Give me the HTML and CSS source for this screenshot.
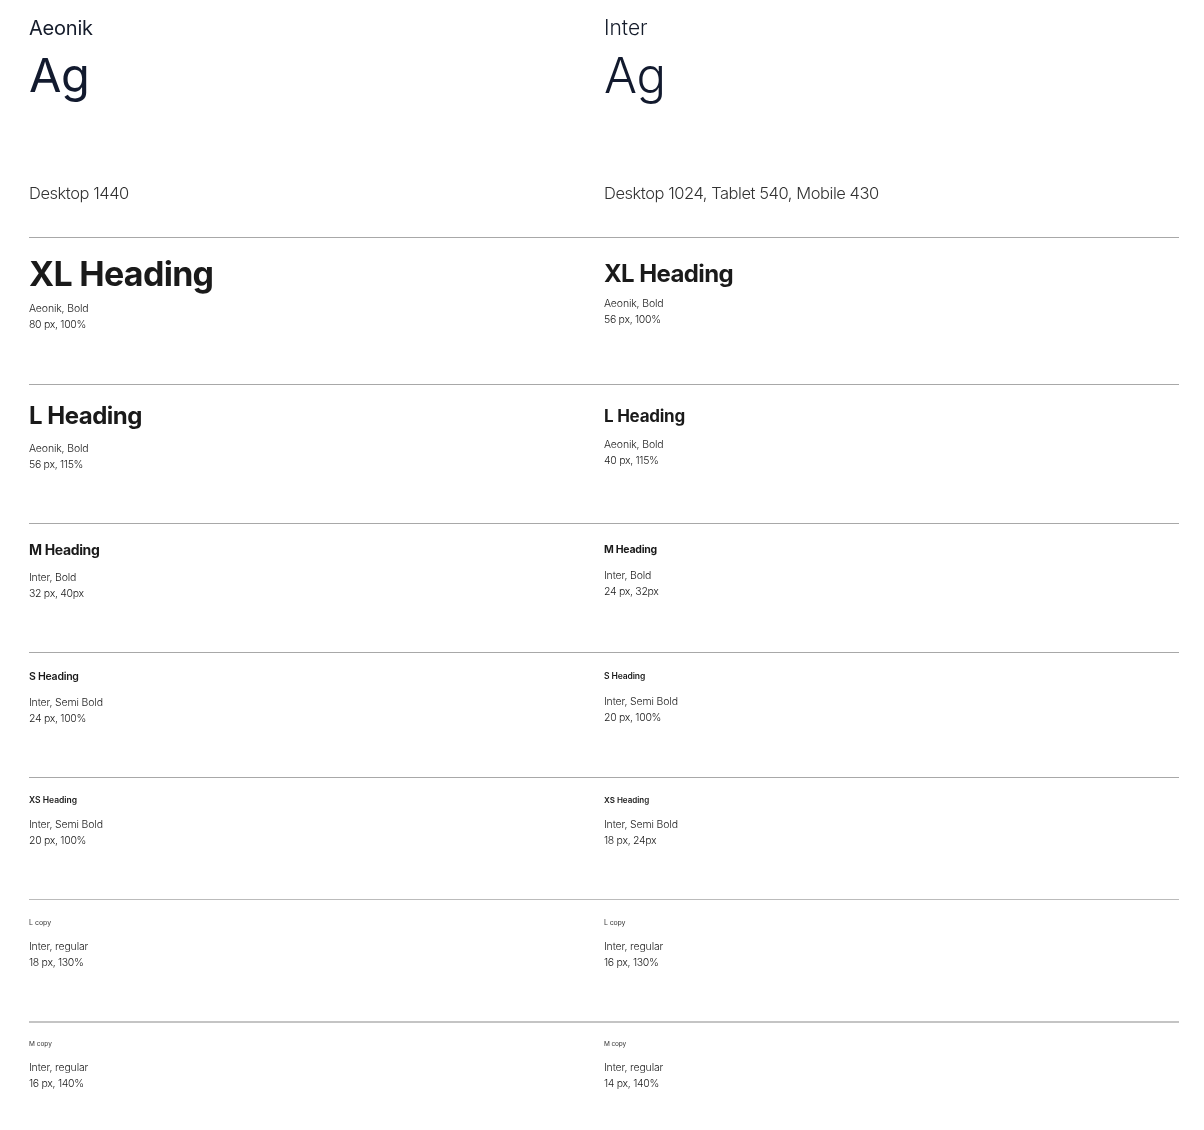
FILE: index.html
```html
<!DOCTYPE html>
<html lang="en">
<head>
<meta charset="utf-8">
<title>Type scale</title>
<link rel="stylesheet" href="styles.css">
</head>
<body>
<main class="sheet">
  <section class="intro">
    <div class="intro-col">
      <div class="family family-aeonik">Aeonik</div>
      <div class="sample">Ag</div>
      <div class="breakpoint">Desktop 1440</div>
    </div>
    <div class="intro-col">
      <div class="family">Inter</div>
      <div class="sample sample-inter">Ag</div>
      <div class="breakpoint">Desktop 1024, Tablet 540, Mobile 430</div>
    </div>
  </section>

  <section class="row row-xl">
    <div class="cell"><div class="h h-xl">XL Heading</div><p class="meta meta-xl"><span class="name">Aeonik, Bold</span><span class="size">80 px, 100%</span></p></div>
    <div class="cell"><div class="h h-xl2">XL Heading</div><p class="meta meta-xl2"><span class="name">Aeonik, Bold</span><span class="size">56 px, 100%</span></p></div>
  </section>
  <section class="row row-l">
    <div class="cell"><div class="h h-l">L Heading</div><p class="meta meta-l"><span class="name">Aeonik, Bold</span><span class="size">56 px, 115%</span></p></div>
    <div class="cell"><div class="h h-l2">L Heading</div><p class="meta meta-l2"><span class="name">Aeonik, Bold</span><span class="size">40 px, 115%</span></p></div>
  </section>
  <section class="row row-m">
    <div class="cell"><div class="h h-m">M Heading</div><p class="meta meta-m"><span class="name">Inter, Bold</span><span class="size">32 px, 40px</span></p></div>
    <div class="cell"><div class="h h-m2">M Heading</div><p class="meta meta-m2"><span class="name">Inter, Bold</span><span class="size">24 px, 32px</span></p></div>
  </section>
  <section class="row row-s">
    <div class="cell"><div class="h h-s">S Heading</div><p class="meta meta-s"><span class="name">Inter, Semi Bold</span><span class="size">24 px, 100%</span></p></div>
    <div class="cell"><div class="h h-s2">S Heading</div><p class="meta meta-s2"><span class="name">Inter, Semi Bold</span><span class="size">20 px, 100%</span></p></div>
  </section>
  <section class="row row-xs">
    <div class="cell"><div class="h h-xs">XS Heading</div><p class="meta meta-xs"><span class="name">Inter, Semi Bold</span><span class="size">20 px, 100%</span></p></div>
    <div class="cell"><div class="h h-xs2">XS Heading</div><p class="meta meta-xs"><span class="name">Inter, Semi Bold</span><span class="size">18 px, 24px</span></p></div>
  </section>
  <section class="row row-lc">
    <div class="cell"><div class="copy">L copy</div><p class="meta meta-lc"><span class="name">Inter, regular</span><span class="size">18 px, 130%</span></p></div>
    <div class="cell"><div class="copy copy-r">L copy</div><p class="meta meta-lc"><span class="name">Inter, regular</span><span class="size">16 px, 130%</span></p></div>
  </section>
  <section class="row row-mc">
    <div class="cell"><div class="copy copy-m">M copy</div><p class="meta meta-mc"><span class="name">Inter, regular</span><span class="size">16 px, 140%</span></p></div>
    <div class="cell"><div class="copy copy-m copy-r">M copy</div><p class="meta meta-mc"><span class="name">Inter, regular</span><span class="size">14 px, 140%</span></p></div>
  </section>
</main>
</body>
</html>
```
FILE: styles.css
```css
* { box-sizing: border-box; }
html, body { margin: 0; padding: 0; background: #fff; }
body { font-family: Inter, "Liberation Sans", sans-serif; color: #1a1a1a; }
.sheet { width: 1204px; padding: 0 25px 0 29px; will-change: transform; }

.intro, .row { display: grid; grid-template-columns: 575px 575px; }
.intro { height: 237px; padding-top: 15px; }
.family { font-size: 21px; line-height: 26px; font-weight: 350; color: #151c2b; }
.family-aeonik { font-size: 20px; letter-spacing: -0.2px; font-weight: 400; }
.sample { font-size: 47px; line-height: 60px; margin-top: 4px; color: #121a2e; font-weight: 400; letter-spacing: -0.5px; }
.sample-inter { font-weight: 350; font-size: 49px; margin-top: 5px; letter-spacing: -0.2px; }
.breakpoint { font-size: 16.5px; line-height: 24px; font-weight: 300; color: #333; margin-top: 76px; letter-spacing: -0.45px; }
.sample-inter + .breakpoint { margin-top: 75px; }

.row { border-top: 1px solid #a8a8a8; }
.row-xl { height: 147px; padding-top: 16px; }
.row-l { height: 139px; padding-top: 16px; }
.row-m { height: 129px; padding-top: 17px; }
.row-s { height: 125px; padding-top: 16px; }
.row-xs { height: 122px; padding-top: 14px; }
.row-lc { height: 122px; padding-top: 17px; border-top-color: #bbb; }
.row-mc { height: 108px; padding-top: 15px; border-top: 2px solid #c4c4c4; }

.h { font-weight: 700; color: #1a1a1a; }
.h-xl { font-size: 34px; line-height: 40px; letter-spacing: -0.7px; }
.h-xl2 { font-size: 24px; line-height: 40px; letter-spacing: -0.6px; }
.h-l { font-size: 24px; line-height: 30px; letter-spacing: -0.5px; }
.h-l2 { font-size: 17px; line-height: 30px; letter-spacing: -0.25px; }
.h-m { font-size: 14px; line-height: 18px; letter-spacing: -0.35px; }
.h-m2 { font-size: 10.5px; line-height: 18px; letter-spacing: -0.25px; }
.h-s { font-size: 10.5px; line-height: 16px; font-weight: 600; letter-spacing: -0.25px; }
.h-s2 { font-size: 8.5px; line-height: 14px; font-weight: 600; letter-spacing: -0.1px; }
.h-xs { font-size: 8.5px; line-height: 16px; font-weight: 600; }
.h-xs2 { font-size: 8px; line-height: 16px; font-weight: 600; }
.copy { font-size: 7px; line-height: 12px; color: #333; }
.copy-m { font-size: 6.5px; }
.copy-r { letter-spacing: -0.15px; }

.meta { margin: 0; font-size: 10.5px; line-height: 16px; font-weight: 350; color: #1a1a1a; }
.name, .size { display: block; }
.name { letter-spacing: -0.15px; }
.size { letter-spacing: -0.3px; }
.meta-xl { margin-top: 7px; }
.meta-xl2 { margin-top: 2px; }
.meta-l { margin-top: 10px; }
.meta-l2 { margin-top: 6px; }
.meta-m { margin-top: 11px; }
.meta-m2 { margin-top: 9px; }
.meta-s { margin-top: 10px; }
.meta-s2 { margin-top: 11px; }
.meta-xs { margin-top: 9px; }
.meta-lc { margin-top: 10px; }
.meta-mc { margin-top: 10px; }
```
